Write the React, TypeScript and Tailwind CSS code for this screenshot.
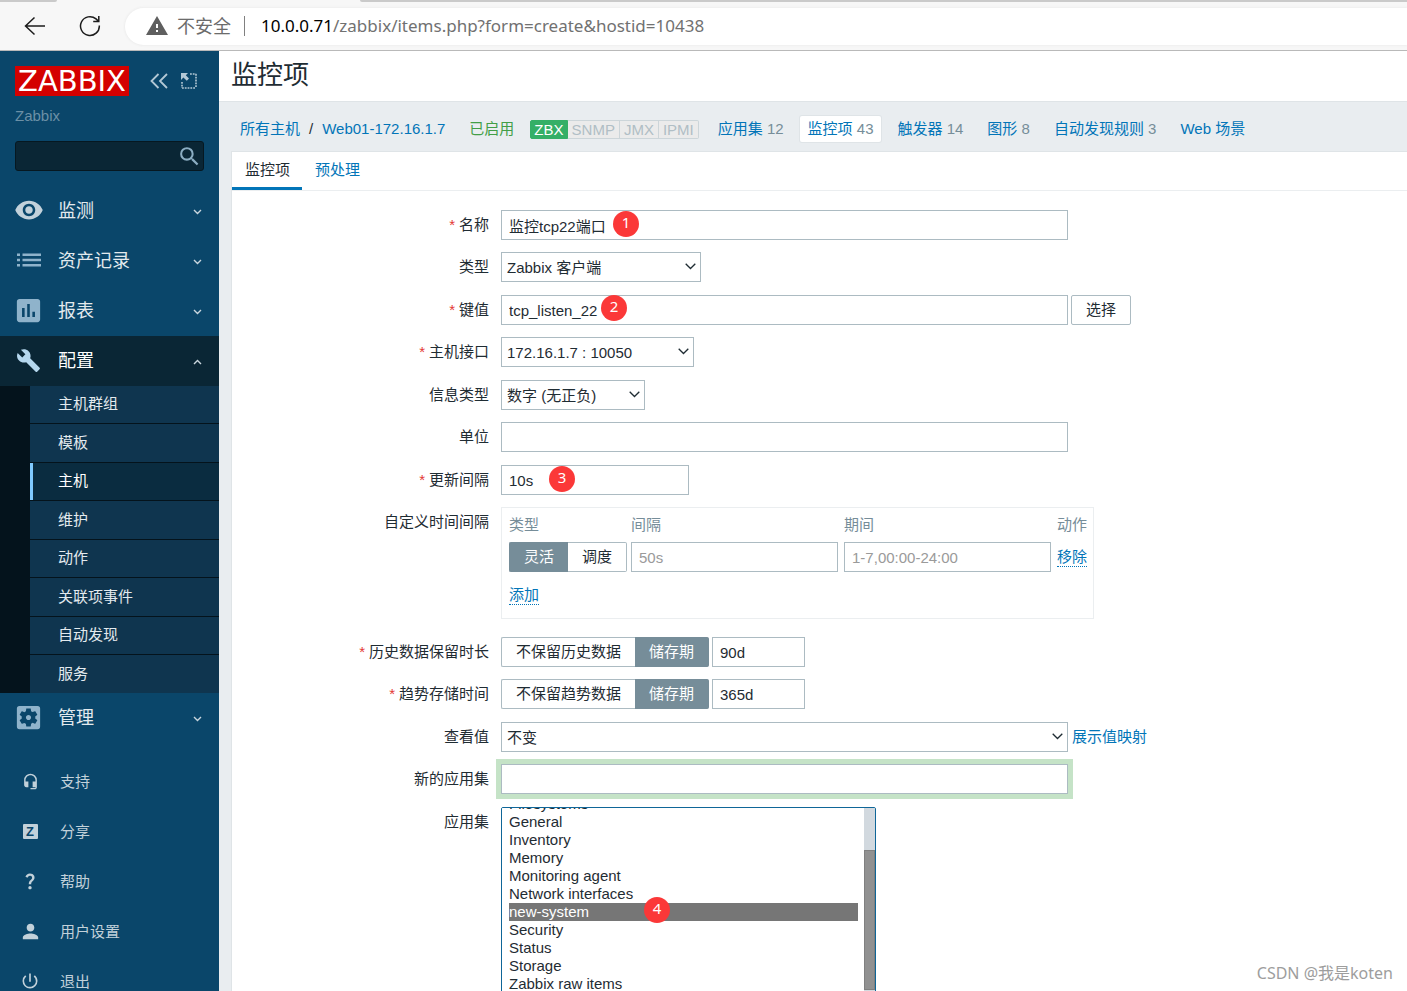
import React, { useEffect, useRef } from "react";
import {
  MdAssessment,
  MdBuild,
  MdHeadsetMic,
  MdPerson,
  MdPowerSettingsNew,
  MdQuestionMark,
  MdSearch,
  MdSettingsApplications,
  MdVisibility,
  MdWarning,
} from "react-icons/md";

const sans = "font-['Liberation_Sans','Noto_Sans_CJK_SC',sans-serif]";
const uiSans = "font-['Noto_Sans','Noto_Sans_CJK_SC',sans-serif]";
const box = "h-[30px] border border-[#acbbc2] bg-white px-[7px] text-[15px] text-[#1f2c33] outline-none placeholder:text-[#9a9a9a]";

function BrowserBar() {
  return (
    <header className={`shrink-0 border-b border-[#b9b9b9] bg-[#f7f7f7] ${uiSans}`}>
      <div className="flex h-[2px] justify-between">
        <span className="w-[57px] rounded-br-sm bg-[#cacaca]" />
        <span className="ml-[303px] flex-1 rounded-bl-sm bg-[#cacaca]" />
      </div>
      <div className="flex h-12 items-center">
        <button aria-label="返回" className="ml-6">
          <svg width="22" height="20" viewBox="0 0 22 20" fill="none" stroke="#1c1c1c" strokeWidth="1.5">
            <path d="M10.5 1.5 1.5 10l9 8.5M1.5 10H21" />
          </svg>
        </button>
        <button aria-label="刷新" className="ml-[33px]">
          <svg width="22" height="22" viewBox="0 0 22 22" fill="none" stroke="#1c1c1c" strokeWidth="1.5">
            <path d="M20.3 10.5A9.4 9.4 0 1 1 17 3.9l2.6 2.4M19.8 1v5.6h-5.6" />
          </svg>
        </button>
        <div className="ml-6 flex h-[37px] flex-1 items-center rounded-l-full bg-white pl-[20px] text-[17px] shadow-[0_0_3px_#e4e4e4]">
          <MdWarning size={24} color="#5f5f5f" />
          <span className="ml-2 text-[18px] leading-6 text-[#6b6b6b]">不安全</span>
          <span className="mx-4 ml-[13px] h-5 w-px bg-[#808080]" />
          <span className="leading-6 text-[#717171]">
            <span className="text-black">10.0.0.71</span>/zabbix/items.php?form=create&amp;hostid=10438
          </span>
        </div>
      </div>
    </header>
  );
}

function ListIcon() {
  return (
    <svg width="24" height="14" viewBox="0 0 24 14" fill="currentColor">
      <path d="M0 .5h3v2.4H0zM5.5.5H24v2.4H5.5zM0 5.8h3v2.4H0zM5.5 5.8H24v2.4H5.5zM0 11h3v2.4H0zM5.5 11H24v2.4H5.5z" />
    </svg>
  );
}

function Caret({ up = false }: { up?: boolean }) {
  return (
    <svg width="9" height="6" viewBox="0 0 9 6" fill="none" stroke="currentColor" strokeWidth="1.4">
      <path d={up ? "M1 5 4.5 1.5 8 5" : "M1 1 4.5 4.5 8 1"} />
    </svg>
  );
}

function MenuItem({ icon, label, open = false }: { icon: React.ReactNode; label: string; open?: boolean }) {
  return (
    <a
      href="#"
      className={`flex h-[50px] items-center text-[18px] ${open ? "bg-[#0a2635] text-white" : "text-[#e3eaee]"}`}
    >
      <span className={`flex w-[58px] justify-center pr-px pb-[2px] ${open ? "text-[#b5d7ee]" : "text-[#8fb3cb]"}`}>
        {icon}
      </span>
      <span className="flex-1">{label}</span>
      <span className="mr-[17px] pt-[2px] text-[#c9d6de]">
        <Caret up={open} />
      </span>
    </a>
  );
}

const subItems = ["主机群组", "模板", "主机", "维护", "动作", "关联项事件", "自动发现", "服务"];

const footerItems = [
  { label: "支持", icon: <MdHeadsetMic size={17} /> },
  {
    label: "分享",
    icon: (
      <span className="flex size-[15px] items-center justify-center rounded-[1px] bg-[#c2d1da] text-[13px] leading-none font-bold text-[#0a466a]">
        Z
      </span>
    ),
  },
  { label: "帮助", icon: <MdQuestionMark size={20} /> },
  { label: "用户设置", icon: <MdPerson size={23} /> },
  { label: "退出", icon: <MdPowerSettingsNew size={20} /> },
];

function Sidebar() {
  return (
    <aside className="w-[219px] shrink-0 overflow-hidden bg-[#0a466a]">
      <div className="flex items-center px-[15px] pt-[15px]">
        <a
          href="#"
          className="flex h-[30px] w-[114px] items-center justify-center bg-[#d40000] font-['DejaVu_Sans',sans-serif] text-[29px] leading-[30px] text-white"
        >
          ZABBIX
        </a>
        <button aria-label="收起侧边栏" className="ml-[21px]">
          <svg width="18" height="16" viewBox="0 0 18 16" fill="none" stroke="#b3c8d5" strokeWidth="1.8">
            <path d="M8.5 1 1.5 8l7 7M17 1l-7 7 7 7" />
          </svg>
        </button>
        <button aria-label="隐藏侧边栏" className="ml-[13px]">
          <svg width="16" height="16" viewBox="0 0 16 16" fill="none" stroke="#b3c8d5">
            <path d="M9 1h6.2M15 1v14M1 15h14M1 9v6" strokeWidth="1.6" strokeDasharray="1.8 1" />
            <path d="M0 0h7L4.8 2.2 8 5.4 5.8 7.8 2.4 4.6 0 7z" fill="#b3c8d5" stroke="none" />
          </svg>
        </button>
      </div>
      <p className="px-[15px] pt-[10px] text-[15px] leading-5 text-[#6c90a6]">Zabbix</p>
      <div className="mx-[15px] mt-[15px] flex h-[30px] items-center rounded-[3px] border border-[#061821] bg-[#0a2635]">
        <input aria-label="搜索" className="h-full w-full min-w-0 flex-1 bg-transparent px-2 text-[15px] text-white outline-none" />
        <button aria-label="开始搜索" className="mr-px">
          <MdSearch size={25} color="#8badc2" />
        </button>
      </div>
      <nav className="mt-[15px]">
        <MenuItem icon={<MdVisibility size={30} color="#c2d1da" />} label="监测" />
        <MenuItem icon={<ListIcon />} label="资产记录" />
        <MenuItem icon={<MdAssessment size={31} />} label="报表" />
        <MenuItem icon={<MdBuild size={25} />} label="配置" open />
        <ul className="bg-[#04131c] pl-[30px] text-[15px] text-[#e3eaee]">
          {subItems.map((s) => (
            <li key={s} className="h-[38px] border-b border-[#04131c] last:border-b-0 even:h-[39px] last:even:h-[38px]">
              <a
                href="#"
                className={`flex h-full items-center border-l-[3px] pl-[25px] ${
                  s === "主机" ? "border-[#80caff] bg-[#0a2c40] text-white" : "border-transparent bg-[#0f354f]"
                }`}
              >
                {s}
              </a>
            </li>
          ))}
        </ul>
        <MenuItem icon={<MdSettingsApplications size={31} />} label="管理" />
      </nav>
      <nav className="mt-[14px] text-[15px] text-[#c2d1da]">
        {footerItems.map((f) => (
          <a key={f.label} href="#" className="flex h-[50px] items-center">
            <span className="flex w-[60px] justify-center pb-[2px]">{f.icon}</span>
            {f.label}
          </a>
        ))}
      </nav>
    </aside>
  );
}

const sections = [
  { label: "应用集", count: "12" },
  { label: "监控项", count: "43" },
  { label: "触发器", count: "14" },
  { label: "图形", count: "8" },
  { label: "自动发现规则", count: "3" },
  { label: "Web 场景", count: "" },
];

function Breadcrumbs() {
  return (
    <nav className="flex h-[49px] items-center gap-2 pt-[5px] pl-px text-[15px] whitespace-nowrap text-[#0275b8]">
      <a href="#" className="pl-2">
        所有主机
      </a>
      <span className="px-px text-[#1f2c33]">/</span>
      <a href="#" className="pr-2">
        Web01-172.16.1.7
      </a>
      <span className="px-2 text-[#429e47]">已启用</span>
      <span className="mr-[3px] flex leading-[17px] text-[#b0bec5]">
        <span className="rounded-l-[2px] border border-[#34af67] bg-[#34af67] px-[3px] text-white">ZBX</span>
        <span className="border border-l-0 border-[#ccd5d9] bg-[#ebebeb] px-[4px]">SNMP</span>
        <span className="border border-l-0 border-[#ccd5d9] bg-[#ebebeb] px-[4px]">JMX</span>
        <span className="rounded-r-[2px] border border-l-0 border-[#ccd5d9] bg-[#ebebeb] px-[4px]">IPMI</span>
      </span>
      {sections.map((s) => (
        <a
          key={s.label}
          href="#"
          className={`rounded-[2px] px-2 leading-[26px] ${s.label === "监控项" ? "bg-white shadow-[0_0_0_1px_#dfe4e7]" : ""}`}
        >
          {s.label}
          {s.count && <span className="text-[#768d99]"> {s.count}</span>}
        </a>
      ))}
    </nav>
  );
}

function Row({
  label,
  id,
  required = false,
  children,
}: {
  label: string;
  id: string;
  required?: boolean;
  children: React.ReactNode;
}) {
  return (
    <div className="mb-3 flex items-start even:mb-[13px]">
      <label htmlFor={id} className="mr-3 w-[257px] shrink-0 text-right text-[15px] leading-[29px] text-[#1f2c33]">
        {required && <span className="mr-1 text-[#e33734]">*</span>}
        {label}
      </label>
      {children}
    </div>
  );
}

function Badge({ n, className }: { n: number; className: string }) {
  return (
    <span
      className={`absolute flex size-[26px] items-center justify-center rounded-full bg-[#fb3838] pb-[4px] text-[15px] leading-none text-white ${uiSans} ${className}`}
    >
      {n}
    </span>
  );
}

function Select({ id, value, className }: { id: string; value: string; className: string }) {
  return (
    <div className={`relative ${className}`}>
      <select id={id} className={`${box} w-full appearance-none pt-[2px] pl-[5px]`}>
        <option>{value}</option>
      </select>
      <svg
        className="pointer-events-none absolute top-[11px] right-[5px]"
        width="11"
        height="7"
        viewBox="0 0 11 7"
        fill="none"
        stroke="#1f2c33"
        strokeWidth="1.3"
      >
        <path d="M.7.7 5.500 5.500 10.300.7" />
      </svg>
    </div>
  );
}

function Segmented({ name, id, options, active }: { name: string; id: string; options: string[]; active: number }) {
  return (
    <span className="flex h-[30px] shrink-0 text-[15px] leading-7 text-[#1f2c33]">
      {options.map((o, i) => (
        <label key={o} className="relative">
          <input
            type="radio"
            id={i === active ? id : undefined}
            name={name}
            defaultChecked={i === active}
            className="peer absolute opacity-0"
          />
          <span
            className={`block border border-[#acbbc2] bg-white px-[14px] peer-checked:border-[#768d99] peer-checked:bg-[#768d99] peer-checked:text-white ${
              i === 0 ? "rounded-l-[2px] border-r-0" : "rounded-r-[2px] border-l-0"
            }`}
          >
            {o}
          </span>
        </label>
      ))}
    </span>
  );
}

function IntervalTable() {
  return (
    <div className="mb-[5px] border border-[#ebeef0] pr-[6px] pl-[7px]">
      <table className="border-collapse text-left text-[15px]">
        <thead>
          <tr className="h-[34px] text-[#768d99]">
            <th className="font-normal">类型</th>
            <th className="font-normal">间隔</th>
            <th className="font-normal">期间</th>
            <th className="font-normal">动作</th>
          </tr>
        </thead>
        <tbody>
          <tr>
            <td className="p-0 pr-1">
              <Segmented name="interval-type" id="custom" options={["灵活", "调度"]} active={0} />
            </td>
            <td className="p-0 pr-[6px]">
              <input aria-label="间隔" placeholder="50s" className={`${box} block w-[207px]`} />
            </td>
            <td className="p-0 pr-[6px]">
              <input aria-label="期间" placeholder="1-7,00:00-24:00" className={`${box} block w-[207px]`} />
            </td>
            <td className="p-0">
              <button className="block border-b border-dotted border-[#0275b8] leading-[19px] text-[#0275b8]">移除</button>
            </td>
          </tr>
          <tr className="h-[46px]">
            <td colSpan={4} className="p-0">
              <button className="block border-b border-dotted border-[#0275b8] leading-[19px] text-[#0275b8]">添加</button>
            </td>
          </tr>
        </tbody>
      </table>
    </div>
  );
}

const applications = [
  "Filesystems",
  "General",
  "Inventory",
  "Memory",
  "Monitoring agent",
  "Network interfaces",
  "new-system",
  "Security",
  "Status",
  "Storage",
  "Zabbix raw items",
];

function ApplicationList() {
  const ref = useRef<HTMLSelectElement>(null);
  useEffect(() => {
    if (ref.current) ref.current.scrollTop = 13;
  }, []);
  return (
    <div className="relative flex h-[187px] w-full max-w-[375px] overflow-hidden rounded-[2px] border border-[#0f6698]">
      <select
        ref={ref}
        id="apps"
        multiple
        size={10}
        defaultValue={["new-system"]}
        className="h-[185px] flex-1 appearance-none overflow-y-scroll bg-white pr-[6px] pl-[7px] text-[15px] text-[#1f2c33] outline-none [scrollbar-width:none]"
      >
        {applications.map((a) => (
          <option
            key={a}
            className="h-[18px] min-h-0 p-0 leading-[18px] checked:bg-linear-to-r checked:from-[#767676] checked:to-[#767676] checked:[-webkit-text-fill-color:#fff]"
          >
            {a}
          </option>
        ))}
      </select>
      <div className="flex w-[11px] flex-col bg-[#d2d9df] pt-[42px] pb-[3px]">
        <span className="flex-1 border border-[#808080] bg-[#919191]" />
      </div>
      <Badge n={4} className="top-[89px] left-[142px]" />
    </div>
  );
}

function ItemForm() {
  return (
    <form className="pt-[19px] pr-3" onSubmit={(e) => e.preventDefault()}>
      <Row label="名称" id="name" required>
        <div className="relative w-full max-w-[567px]">
          <input id="name" defaultValue="监控tcp22端口" className={`${box} w-full`} />
          <Badge n={1} className="top-[1px] left-[112px]" />
        </div>
      </Row>
      <Row label="类型" id="type">
        <Select id="type" value="Zabbix 客户端" className="w-[200px]" />
      </Row>
      <Row label="键值" id="key" required>
        <div className="relative w-full max-w-[567px]">
          <input id="key" defaultValue="tcp_listen_22" className={`${box} w-full`} />
          <Badge n={2} className="top-0 left-[100px]" />
        </div>
        <button className="ml-[3px] h-[30px] w-[60px] shrink-0 rounded-[2px] border border-[#acbbc2] bg-white text-[15px] text-[#1f2c33]">
          选择
        </button>
      </Row>
      <Row label="主机接口" id="interface" required>
        <Select id="interface" value="172.16.1.7 : 10050" className="w-[193px]" />
      </Row>
      <Row label="信息类型" id="value-type">
        <Select id="value-type" value="数字 (无正负)" className="w-[144px]" />
      </Row>
      <Row label="单位" id="units">
        <input id="units" className={`${box} w-full max-w-[567px]`} />
      </Row>
      <Row label="更新间隔" id="delay" required>
        <div className="relative w-[188px]">
          <input id="delay" defaultValue="10s" className={`${box} w-full`} />
          <Badge n={3} className="top-[1px] left-12" />
        </div>
      </Row>
      <Row label="自定义时间间隔" id="custom">
        <IntervalTable />
      </Row>
      <Row label="历史数据保留时长" id="history" required>
        <Segmented name="history-mode" id="history" options={["不保留历史数据", "储存期"]} active={1} />
        <input aria-label="历史数据储存期" defaultValue="90d" className={`${box} ml-[3px] w-[93px]`} />
      </Row>
      <Row label="趋势存储时间" id="trends" required>
        <Segmented name="trends-mode" id="trends" options={["不保留趋势数据", "储存期"]} active={1} />
        <input aria-label="趋势储存期" defaultValue="365d" className={`${box} ml-[3px] w-[93px]`} />
      </Row>
      <Row label="查看值" id="valuemap">
        <Select id="valuemap" value="不变" className="w-full max-w-[567px]" />
        <a href="#" className="ml-1 shrink-0 text-[15px] leading-[30px] text-[#0275b8]">
          展示值映射
        </a>
      </Row>
      <Row label="新的应用集" id="new-app">
        <input id="new-app" className={`${box} w-full max-w-[567px] shadow-[0_0_0_5px_#c5e3c7]`} />
      </Row>
      <Row label="应用集" id="apps">
        <ApplicationList />
      </Row>
    </form>
  );
}

export default function App() {
  return (
    <div className={`relative flex h-screen flex-col overflow-hidden bg-[#e9edf0] ${sans}`}>
      <BrowserBar />
      <div className="flex min-h-0 flex-1">
        <Sidebar />
        <main className="min-w-0 flex-1 overflow-y-auto [scrollbar-width:none]">
          <div className="border-b border-[#dfe4e7] bg-white px-3">
            <h1 className="h-[50px] text-[26px] leading-[48px] text-[#1f2c33]">监控项</h1>
          </div>
          <div className="pl-3">
            <Breadcrumbs />
            <section className="border-t border-l border-[#dfe4e7] bg-white">
              <div className="flex border-b border-[#ebeef0] text-[15px]">
                <button className="h-[38px] border-b-[3px] border-[#0275b8] pt-[2px] pr-3 pl-[13px] text-[#1f2c33]">监控项</button>
                <button className="h-[38px] border-b-[3px] border-transparent px-[13px] pt-[2px] text-[#0275b8]">预处理</button>
              </div>
              <ItemForm />
            </section>
          </div>
        </main>
      </div>
      <p className={`absolute right-[14px] bottom-[6px] text-[16px] leading-6 text-[#9d9d9d] ${uiSans}`}>CSDN @我是koten</p>
    </div>
  );
}
